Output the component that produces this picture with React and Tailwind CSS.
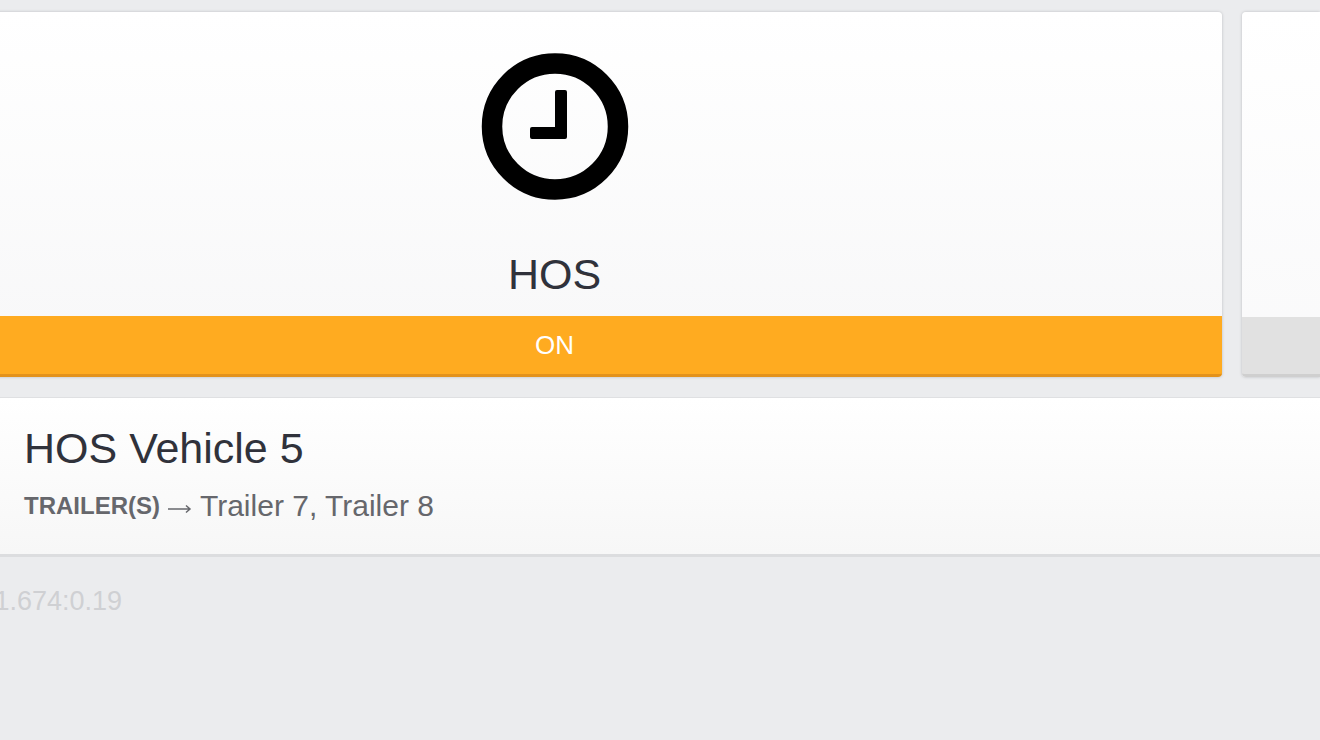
function ClockIcon() {
  return (
    <svg className="size-37" viewBox="0 0 148 148" aria-hidden="true">
      <circle cx="74" cy="74.5" r="63" fill="none" stroke="#000" strokeWidth="20.5" />
      <path
        d="M76 38h8q2 0 2 2v45q0 2-2 2H51q-2 0-2-2v-8q0-2 2-2h23V40q0-2 2-2z"
        fill="#000"
      />
    </svg>
  );
}

export default function App() {
  return (
    <div className="min-h-screen overflow-hidden bg-[#ebecee] pt-3 font-['Liberation_Sans',Arial,sans-serif] text-[#30323b]">
      <main>
        <div className="-ml-[113px] flex gap-5">
          <button
            type="button"
            className="flex flex-1 flex-col rounded-sm bg-linear-to-b from-white to-[#f7f7f8] shadow-[0_0_3px_#b8b9bd]"
          >
            <span className="flex w-full flex-col items-center gap-12 pt-10 pb-4">
              <ClockIcon />
              <span className="text-[43px] leading-[52px]">HOS</span>
            </span>
            <span className="w-full rounded-b-sm border-b-3 border-[#e3921b] bg-[#ffab20] text-[26px] leading-[58px] text-white">
              ON
            </span>
          </button>
          <button
            type="button"
            aria-label="Next tile"
            className="flex w-[78px] flex-col rounded-l-sm bg-linear-to-b from-white to-[#f9f9fa] shadow-[0_0_3px_#b8b9bd]"
          >
            <span className="w-full flex-1" />
            <span className="h-15 w-full rounded-bl-sm border-b-3 border-[#cfcfcf] bg-[#e1e1e1]" />
          </button>
        </div>

        <section className="mt-5 border-t border-b-3 border-t-[#dfe0e2] border-b-[#dcdddf] bg-linear-to-b from-white to-[#f7f7f7] px-6 pt-6 pb-7">
          <h2 className="text-[43px] leading-[52px]">HOS Vehicle 5</h2>
          <p className="mt-3 flex items-center gap-2 text-[#66676c]">
            <span className="text-2xl font-bold">TRAILER(S)</span>
            <svg className="h-6 w-6" viewBox="0 0 24 24" aria-label="to">
              <path
                d="M0 15h22M18 11.5l4 3.5-4 3.5"
                fill="none"
                stroke="currentColor"
                strokeWidth="1.5"
              />
            </svg>
            <span className="text-[30px] leading-10">Trailer 7, Trailer 8</span>
          </p>
        </section>
      </main>

      <footer className="mt-6 flex w-[122px] justify-end text-[27px] leading-10 text-[#cfd0d3]">
        1.674:0.19
      </footer>
    </div>
  );
}
